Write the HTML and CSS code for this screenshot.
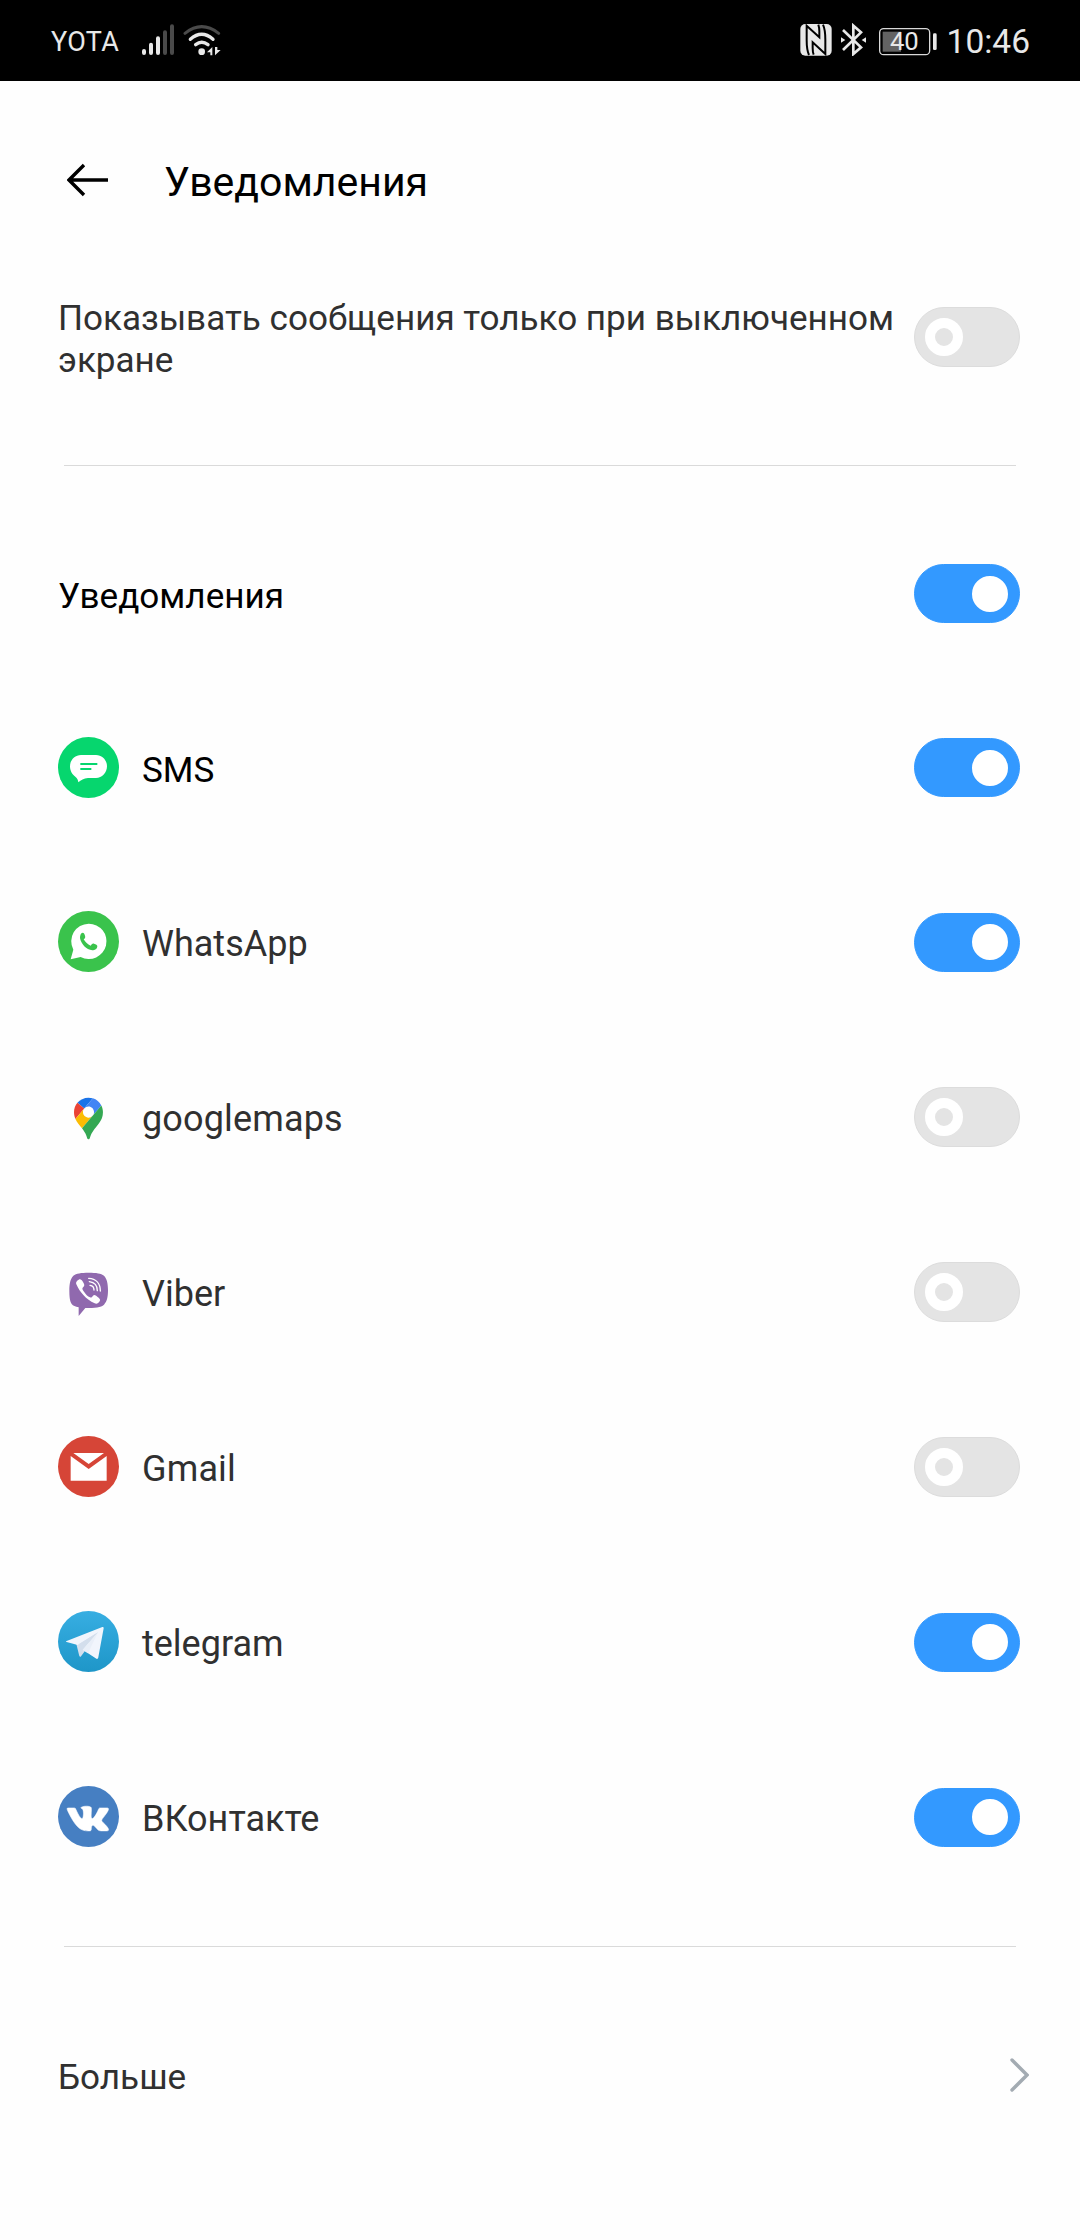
FILE: index.html
```html
<!DOCTYPE html>
<html lang="ru">
<head>
  <meta charset="UTF-8">
  <title>Уведомления</title>
  <link rel="stylesheet" href="styles.css">
</head>
<body>
<div class="statusbar">
  <span class="carrier">YOTA</span>
  <svg class="signal" viewBox="423 72 99 96" width="33" height="32">
    <g stroke="#e8e8e8" stroke-width="12" stroke-linecap="round">
      <path d="M432 153v6M453 134v25M474 115v44"/>
      <path stroke="#4a4a4a" d="M495 97v62M516 79v80"/>
    </g>
  </svg>
  <svg class="wifi" viewBox="549 72 114 96" width="38" height="32">
    <g fill="none" stroke="#e8e8e8" stroke-width="10" stroke-linecap="round">
      <path stroke="#4a4a4a" stroke-width="9" d="M555 100Q605 60 656 100"/>
      <path d="M571 118Q605 88 639 118"/>
      <path d="M587 134Q605 120 624 134"/>
    </g>
    <circle cx="605" cy="155" r="10" fill="#e8e8e8"/>
    <path fill="#e8e8e8" d="M637 141v25h-6v-9h-10zM645 141v25l17-16h-10v-9z"/>
  </svg>
  <svg class="nfc" viewBox="60 69 96 99" width="32" height="33">
    <rect x="61" y="72" width="94" height="95" rx="15" fill="#e8e8e8"/>
    <path fill="none" stroke="#000" stroke-width="6" d="M87 165c-6-13-7-28-7-45V77l38 35v-18c0-8-1-14-3-20M129 74c6 13 7 27 7 45v43l-38-35v17c0 9 1 15 3 20"/>
  </svg>
  <svg class="bluetooth" viewBox="180 69 78 99" width="26" height="33">
    <path fill="none" stroke="#e8e8e8" stroke-width="8" d="M189 90l54 52-23 20V77l23 20-54 53"/>
    <path fill="#e8e8e8" d="M183 112l13 8-13 8zM258 112l-13 8 13 8z"/>
  </svg>
  <svg class="battery" viewBox="294 78 180 87" width="60" height="29">
    <rect x="299" y="83" width="150" height="78" rx="12" fill="none" stroke="#d8d8d8" stroke-width="4"/>
    <path fill="#636363" d="M308 92h55v60h-55z"/>
    <rect x="459" y="97" width="11" height="50" rx="4" fill="#e8e8e8"/>
    <text class="battery-level" x="373" y="147" text-anchor="middle">40</text>
  </svg>
  <span class="clock">10:46</span>
</div>

<header class="header">
  <svg class="back" viewBox="0 0 42 34" width="42" height="34">
    <path fill="none" stroke="#000" stroke-width="3.4" d="M41 17H2M17 2L2 17l15 15"/>
  </svg>
  <h1>Уведомления</h1>
</header>

<main>
  <div class="row screen-off">
    <span class="label small">Показывать сообщения только при выключенном экране</span>
    <span class="toggle"></span>
  </div>

  <hr>

  <div class="list">
    <div class="row first">
      <span class="label small dark">Уведомления</span>
      <span class="toggle on"></span>
    </div>

    <div class="row first">
      <svg class="icon" viewBox="0 0 183 183">
        <circle cx="91.5" cy="91.5" r="91.5" fill="#06d66e"/>
        <path fill="#fff" d="M69 54h45c18 0 33 15 33 34s-15 35-33 35H90c-13 1-21 6-29 13-1-7-3-12-9-17-9-6-16-17-16-31 0-19 15-34 33-34z"/>
        <path stroke="#06d66e" stroke-width="6" d="M67 81h51M67 96h33"/>
      </svg>
      <span class="label small dark">SMS</span>
      <span class="toggle on"></span>
    </div>

    <div class="row">
      <svg class="icon" viewBox="0 0 183 183">
        <circle cx="91.5" cy="91.5" r="91.5" fill="#3ac34c"/>
        <path fill="#fff" d="M92 38a53 53 0 1 1-24 100l-30 7 8-29A53 53 0 0 1 92 38z"/>
        <path fill="#3ac34c" d="M74 65c4 0 6 5 7 9 2 5 0 8-4 11 5 9 12 15 21 19 4-5 6-8 10-6 6 2 10 4 10 7 0 9-8 13-15 13-18-2-34-19-37-37 0-8 2-15 8-16z"/>
      </svg>
      <span class="label">WhatsApp</span>
      <span class="toggle on"></span>
    </div>

    <div class="row">
      <svg class="icon" viewBox="0 0 183 183">
        <g transform="translate(48 35) scale(.94)">
          <path fill="#1a73e8" d="M60.2 2.2C55.8.8 51 0 46.1 0 32 0 19.3 6.4 10.8 16.5l21.8 18.3L60.2 2.2z"/>
          <path fill="#ea4335" d="M10.8 16.5C4.1 24.5 0 34.9 0 46.1c0 8.7 1.7 15.7 4.6 22l28-33.3-21.8-18.3z"/>
          <path fill="#4285f4" d="M46.2 28.5c9.8 0 17.7 7.9 17.7 17.7 0 4.3-1.6 8.3-4.2 11.4 0 0 13.9-16.6 27.5-32.7-5.6-10.8-15.3-19-27-22.7L32.6 34.8c3.3-3.8 8.1-6.3 13.6-6.3"/>
          <path fill="#fbbc04" d="M46.2 63.8c-9.8 0-17.7-7.9-17.7-17.7 0-4.3 1.5-8.3 4.1-11.3l-28 33.3c4.8 10.6 12.8 19.2 21 29.9l34.1-40.5c-3.3 3.9-8.1 6.3-13.5 6.3"/>
          <path fill="#34a853" d="M59.1 109.2c15.4-24.1 33.3-35 33.3-63 0-7.7-1.9-14.9-5.2-21.3L25.6 98c2.6 3.4 5.3 7.3 7.9 11.3 9.4 14.5 6.8 23.1 12.8 23.1s3.4-8.7 12.8-23.2"/>
        </g>
      </svg>
      <span class="label wide">googlemaps</span>
      <span class="toggle"></span>
    </div>

    <div class="row">
      <svg class="icon" viewBox="0 0 183 183">
        <path fill="#9069ae" d="M92 35c23 0 37 2 46 9 9 9 12 25 12 44s-3 34-12 43c-9 8-27 10-56 10l-20 24v-26c-10-2-17-5-21-10-6-8-7-24-7-41 0-19 3-35 12-44 9-7 23-9 46-9z"/>
        <path fill="#fff" d="M62 56c5-3 9 0 13 7 5 8 5 11 1 15-5 4-3 7 2 14 5 8 11 14 18 17 5 2 6-2 9-5 4-4 8-1 13 3 8 6 10 9 7 14-4 6-9 9-15 6-26-12-44-32-55-57-3-6 2-11 7-14z"/>
        <path fill="none" stroke="#fff" stroke-width="4" stroke-linecap="round" d="M92 52c22 1 35 15 35 38M94 62c15 2 24 11 24 27M96 73c8 1 12 6 12 14"/>
      </svg>
      <span class="label">Viber</span>
      <span class="toggle"></span>
    </div>

    <div class="row">
      <svg class="icon" viewBox="0 0 183 183">
        <circle cx="91.5" cy="91.5" r="91.5" fill="#d64537"/>
        <path fill="#fff" d="M46 51h92L92 84zM38 60l54 39 54-39v74H38z"/>
      </svg>
      <span class="label wide">Gmail</span>
      <span class="toggle"></span>
    </div>

    <div class="row">
      <svg class="icon" viewBox="0 0 183 183">
        <linearGradient id="sky" x1="0" y1="0" x2="0" y2="1">
          <stop offset="0" stop-color="#37aee2"/>
          <stop offset="1" stop-color="#1e96c8"/>
        </linearGradient>
        <circle cx="91.5" cy="91.5" r="91.5" fill="url(#sky)"/>
        <path fill="#d5e0ee" d="M55 99l80-50-52 68-15 20c-3 0-4-2-5-6z"/>
        <path fill="#f1f5fc" d="M26 90l107-42c3-1 4 1 4 4l-16 87c-1 5-4 6-8 3l-39-26 46-52-61 38-33-9c-3-1-3-2 0-3z"/>
        <path fill="#d3deec" d="M120 64l-46 52-6 20-6-36z"/>
        <path fill="#e9eff8" d="M120 64l-46 52 16 11z"/>
      </svg>
      <span class="label">telegram</span>
      <span class="toggle on"></span>
    </div>

    <div class="row">
      <svg class="icon" viewBox="0 0 183 183">
        <circle cx="91.5" cy="91.5" r="91.5" fill="#467fc2"/>
        <path fill="#fff" stroke="#fff" stroke-width=".3" transform="translate(27 34) scale(5.2 5.3)" d="M13.162 18.994c.609 0 .858-.406.851-.915-.031-1.917.714-2.949 2.059-1.604 1.488 1.488 1.796 2.519 3.603 2.519h3.2c.808 0 1.126-.26 1.126-.668 0-.863-1.421-2.386-2.625-3.504-1.686-1.565-1.765-1.602-.313-3.486 1.801-2.339 4.157-5.336 2.073-5.336h-3.981c-.772 0-.828.435-1.103 1.083-.995 2.347-2.886 5.387-3.604 4.922-.751-.485-.407-2.406-.35-5.261.015-.754.011-1.271-1.141-1.539-.629-.145-1.241-.205-1.809-.205-2.273 0-3.841.953-2.95 1.119 1.571.293 1.42 3.692 1.054 5.16-.638 2.556-3.036-2.024-4.035-4.305-.241-.548-.315-.974-1.175-.974H.787c-.492 0-.787.16-.787.516 0 .602 2.96 6.72 5.786 9.77 2.756 2.975 5.48 2.708 7.376 2.708z"/>
      </svg>
      <span class="label">ВКонтакте</span>
      <span class="toggle on"></span>
    </div>
  </div>

  <hr>

  <div class="row more">
    <span class="label small">Больше</span>
    <svg class="chevron" viewBox="0 0 20 36" width="20" height="36">
      <path fill="none" stroke="#a3abb2" stroke-width="3.4" stroke-linecap="round" d="M3 3l15 15L3 33"/>
    </svg>
  </div>
</main>
</body>
</html>
```
FILE: styles.css
```css
*, *::before {
  box-sizing: border-box;
}

body {
  margin: 0;
  min-height: 2240px;
  background: #fefefe;
  color: #303030;
  font: 36px/42px Roboto, sans-serif;
}

.statusbar {
  display: flex;
  align-items: center;
  height: 81px;
  padding: 0 50px 2px 51px;
  background: #000;
  color: #e8e8e8;
}

.carrier {
  width: 90px;
  padding-top: 4px;
  font-size: 27px;
  letter-spacing: .4px;
}

.wifi {
  margin-left: 9px;
}

.nfc {
  margin-left: auto;
}

.bluetooth {
  margin-left: 8px;
}

.battery {
  margin: 3px 9px 0 12px;
}

.battery-level {
  font-size: 77px;
  fill: #e8e8e8;
}

.clock {
  padding-top: 4px;
  font-size: 33.5px;
}

.header {
  display: flex;
  align-items: center;
  height: 198px;
  padding-left: 67px;
  color: #000;
}

.back {
  margin-bottom: 1px;
}

h1 {
  margin: 4px 0 0 55px;
  font-size: 41px;
  font-weight: 400;
  line-height: 50px;
}

hr {
  height: 1px;
  margin: 0 64px;
  border: 0;
  background: #dadada;
}

.list {
  padding: 40px 0 42px;
}

.row {
  display: flex;
  align-items: center;
  height: 175px;
  padding: 0 60px 0 58px;
}

.row.first {
  height: 174px;
}

.row.screen-off {
  height: 116px;
  margin-bottom: 70px;
}

.row.more {
  height: 256px;
  padding-right: 51px;
}

.icon {
  width: 61px;
  height: 61px;
  margin-right: 23px;
}

.label {
  flex: 1;
  padding-top: 3px;
}

.list .label {
  padding-top: 5px;
}

.label.small {
  font-size: 35.1px;
}

.label.wide {
  letter-spacing: .15px;
}

.label.dark {
  color: #000;
}

.toggle {
  display: flex;
  align-items: center;
  flex-shrink: 0;
  width: 106px;
  height: 60px;
  padding: 0 10px;
  border: 1px solid #dcdcdc;
  border-radius: 30px;
  background: #e4e4e4;
}

.toggle::before {
  content: "";
  width: 38px;
  height: 38px;
  border: 10px solid #fff;
  border-radius: 50%;
}

.toggle.on {
  justify-content: flex-end;
  height: 59px;
  margin-top: 1px;
  padding: 0 11px;
  border-color: #3399ff;
  background: #3399ff;
}

.toggle.on::before {
  width: 36px;
  height: 36px;
  background: #fff;
}
```
